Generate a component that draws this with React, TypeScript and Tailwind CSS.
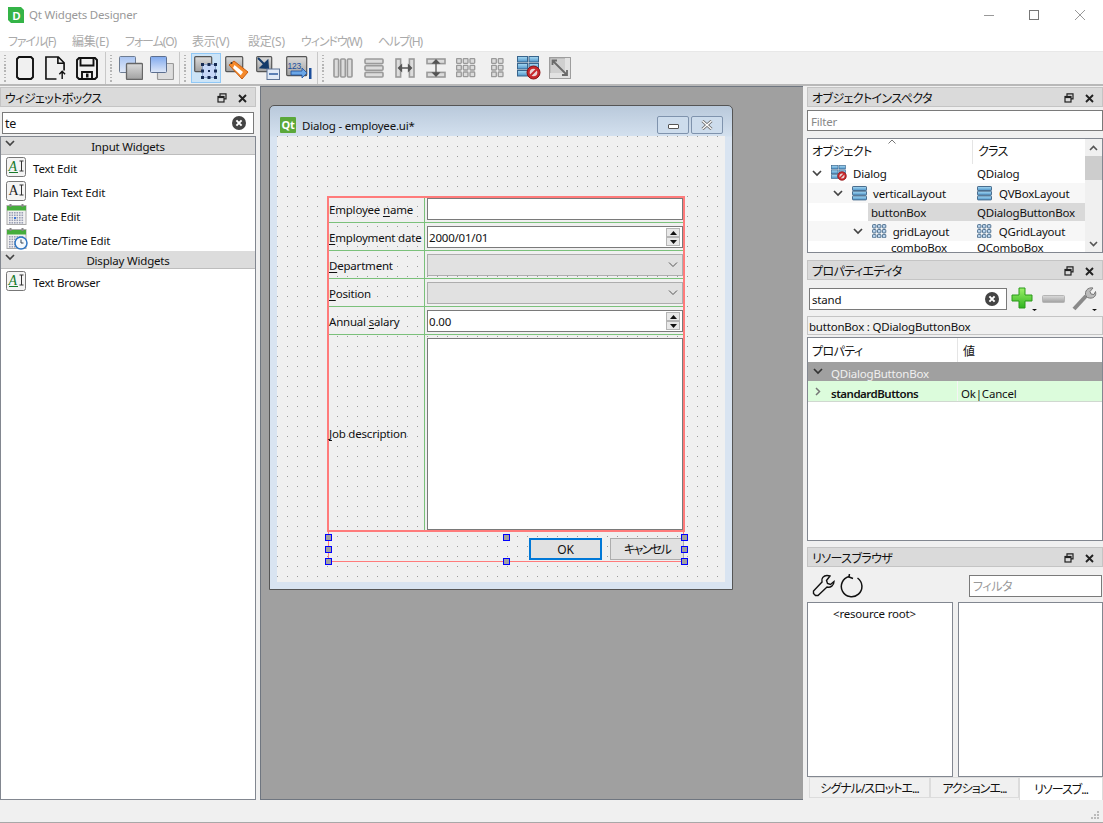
import React from "react";

const Grad = () => (
  <svg width="0" height="0" className="absolute">
    <defs>
      <linearGradient id="gGray" x1="0" y1="0" x2="0" y2="1"><stop offset="0" stopColor="#dcdcdc" /><stop offset="1" stopColor="#a0a0a0" /></linearGradient>
      <linearGradient id="gBlue" x1="0" y1="0" x2="0" y2="1"><stop offset="0" stopColor="#a9c4f2" /><stop offset="1" stopColor="#e1e9f8" /></linearGradient>
      <linearGradient id="gBlue2" x1="0" y1="0" x2="0" y2="1"><stop offset="0" stopColor="#7fa9ee" /><stop offset="1" stopColor="#dfe8f8" /></linearGradient>
      <linearGradient id="gBar" x1="0" y1="0" x2="0" y2="1"><stop offset="0" stopColor="#a9dcf5" /><stop offset="1" stopColor="#4f94c9" /></linearGradient>
      <linearGradient id="gPlus" x1="0" y1="0" x2="0" y2="1"><stop offset="0" stopColor="#9cf06a" /><stop offset="1" stopColor="#2fb31f" /></linearGradient>
    </defs>
  </svg>
);

const DockBtns = () => (
  <div className="ml-auto flex items-center gap-[11px] pr-[8px] pt-[2px]">
    <svg width="10" height="10" viewBox="0 0 10 10" fill="none" stroke="#222" strokeWidth="1.2"><path d="M3 3V.8h6v5H7" /><rect x="1" y="3.5" width="6" height="5.5" /><path d="M1 4.5h6" /></svg>
    <svg width="9" height="9" viewBox="0 0 9 9" stroke="#222" strokeWidth="1.9"><path d="M1 1l7 7M8 1l-7 7" /></svg>
  </div>
);

const DockTitle = ({ title }: { title: string }) => (
  <div className="flex h-[20px] items-center border border-[#c4c4c4] bg-[#dadada] pl-[4px] text-[12px] text-[#111]">
    <span className="pt-[4px] tracking-[-0.6px]">{title}</span>
    <DockBtns />
  </div>
);

const ClearBtn = () => (
  <svg width="14" height="14" viewBox="0 0 14 14" className="shrink-0">
    <circle cx="7" cy="7" r="7" fill="#444" />
    <path d="M4.4 4.4l5.2 5.2M9.6 4.4l-5.2 5.2" stroke="#fff" strokeWidth="2" />
  </svg>
);

const Chev = ({ color = "#444" }: { color?: string }) => (
  <svg width="10" height="7" viewBox="0 0 10 7" fill="none" stroke={color} strokeWidth="1.7" className="shrink-0"><path d="M1 1l4 4 4-4" /></svg>
);

const AIIcon = ({ green }: { green?: boolean }) => (
  <svg width="20" height="20" viewBox="0 0 20 20" className="shrink-0">
    <rect x=".5" y=".5" width="19" height="19" rx="2" fill="#f4f4f4" stroke="#777" />
    <text x="2.5" y="14" fontFamily="Liberation Serif, serif" fontSize="14" fontStyle={green ? "italic" : "normal"} fill={green ? "#177a2b" : "#222"}>A</text>
    {green && <path d="M3 15.5h9" stroke="#177a2b" strokeWidth="1" />}
    <path d="M13.5 4h4M15.5 4v10M13.5 14h4" stroke="#333" strokeWidth="1" fill="none" />
  </svg>
);

const CalIcon = ({ clock }: { clock?: boolean }) => (
  <svg width="22" height="22" viewBox="0 0 22 22" className="shrink-0">
    <rect x="1" y="1.5" width="19" height="19" fill="#f1f1f1" stroke="#aaa" />
    <rect x="1" y="2" width="19" height="4.5" fill="#46ad3c" />
    <rect x="3.5" y="0" width="2" height="3" fill="#888" /><rect x="15.5" y="0" width="2" height="3" fill="#888" />
    {[8, 10.5, 13, 15.5, 18].map((y) => [3, 5.5, 8, 10.5, 13, 15.5].map((x) => <rect key={`${x}-${y}`} x={x} y={y} width="1.6" height="1.6" fill="#9aa0b5" />))}
    {clock ? (
      <g><circle cx="15" cy="15" r="6" fill="#f4f8fc" stroke="#2e76c4" strokeWidth="1.5" /><path d="M15 11.5V15h2.5" stroke="#345" strokeWidth="1" fill="none" /></g>
    ) : (
      <rect x="8" y="13" width="2" height="2" fill="#3d76d8" />
    )}
  </svg>
);

const Cat = ({ title }: { title: string }) => (
  <div className="relative flex h-[18px] items-center justify-center border-b border-[#bdbdbd] bg-[#dcdcdc] pt-[2px] text-[#111]">
    <span className="absolute left-[4px] top-[3px]"><Chev /></span>
    {title}
  </div>
);

const Item = ({ icon, label }: { icon: React.ReactNode; label: string }) => (
  <div className="flex h-[24px] items-center pl-[5px]">
    <span className="flex w-[27px]">{icon}</span>
    <span className="pt-[4px] text-[#111]">{label}</span>
  </div>
);

const Grip = () => (
  <div className="mx-[3px] flex h-[27px] w-[2px] shrink-0 flex-col justify-between">
    {Array.from({ length: 9 }).map((_, i) => <span key={i} className="block h-[1.5px] w-[2px] bg-[#b5b5b5]" />)}
  </div>
);
const Sep = () => <div className="ml-[2px] mr-[1px] h-[32px] w-px shrink-0 bg-[#c8c8c8]" />;

const IconNew = () => (
  <svg width="18" height="24" viewBox="0 0 18 24" fill="none" stroke="#111" strokeWidth="1.9"><path d="M3 1h12l2 2v18l-2 2H3l-2-2V3z" /></svg>
);
const IconOpen = () => (
  <svg width="21" height="24" viewBox="0 0 22 25" fill="none" stroke="#111" strokeWidth="1.7"><path d="M12 24H1V1h13l6 6v8M13.5 1v6.5H20" /><path d="M18 24v-8M15 19l3-3 3 3" strokeWidth="1.5" /></svg>
);
const IconSave = () => (
  <svg width="22" height="23" viewBox="0 0 22 23" fill="none" stroke="#111" strokeWidth="1.9"><path d="M3 1h16l2 2v17l-2 2H3l-2-2V3z" /><path d="M4.5 1.5v7h13v-7M6 22v-7h10v7" /><rect x="10" y="16.5" width="2.5" height="4" fill="#111" stroke="none" /></svg>
);
const IconFront = () => (
  <svg width="24" height="24" viewBox="0 0 24 24" stroke="#6d7c92"><rect x=".5" y=".5" width="16" height="16" rx="1" fill="url(#gBlue)" /><rect x="7.5" y="7.5" width="16" height="16" rx="1" fill="url(#gGray)" stroke="#666" strokeWidth="1.3" /></svg>
);
const IconBack = () => (
  <svg width="24" height="24" viewBox="0 0 24 24"><rect x="7.5" y="7.5" width="16" height="16" rx="1" fill="#ddd" stroke="#999" strokeWidth="1.2" /><rect x=".5" y=".5" width="16" height="16" rx="1" fill="url(#gBlue2)" stroke="#5c6f8f" /></svg>
);
const IconWidget = () => (
  <svg width="24" height="24" viewBox="0 0 24 24">
    <rect x=".7" y=".7" width="17" height="15" rx="1" fill="url(#gGray)" stroke="#555" strokeWidth="1.2" />
    <rect x="8.5" y="8.5" width="13" height="13" fill="#c5d7f7" stroke="#6a86b8" strokeWidth=".6" />
    {[[7, 7], [13.5, 7], [20, 7], [7, 20], [13.5, 20], [20, 20], [7, 13.5], [20, 13.5]].map(([x, y], i) => <rect key={i} x={x} y={y} width="3" height="3" fill="#152a52" />)}
    <rect x="14" y="14" width="2" height="2" fill="#152a52" />
  </svg>
);
const IconTag = () => (
  <svg width="24" height="24" viewBox="0 0 24 24">
    <rect x=".7" y=".7" width="17" height="15" rx="1" fill="url(#gGray)" stroke="#555" strokeWidth="1.2" />
    <path d="M4 9l5-4 14 11-6 7z" fill="#f58a2c" stroke="#c75c10" />
    <path d="M9.5 9l8.5 7-2.2 3.2L8 12z" fill="#fff" />
    <circle cx="6.5" cy="7" r="1" fill="#333" />
  </svg>
);
const IconBuddy = () => (
  <svg width="24" height="24" viewBox="0 0 24 24">
    <rect x=".7" y=".7" width="15" height="15" rx="1" fill="url(#gGray)" stroke="#555" strokeWidth="1.2" />
    <path d="M2 2l9 9M5 11.5l7 .5-.5-7z" stroke="#123a6a" strokeWidth="2" fill="#123a6a" />
    <rect x="11" y="13" width="12.5" height="10.5" fill="#dfe9f7" stroke="#5c7396" />
    <rect x="13" y="17" width="9" height="2" fill="#5a7fb5" />
  </svg>
);
const IconTab = () => (
  <svg width="26" height="24" viewBox="0 0 26 24">
    <rect x=".7" y=".7" width="20" height="19" rx="1" fill="url(#gGray)" stroke="#555" strokeWidth="1.2" />
    <text x="1.5" y="13" fontFamily="Liberation Sans, sans-serif" fontSize="8.5" fill="#1c4f9c">123</text>
    <path d="M5 15h11v-3l5 5-5 5v-3H5z" fill="#6aa6e6" stroke="#1c4f9c" strokeWidth=".8" />
    <rect x="23" y="12" width="2.5" height="11" fill="#1c4f9c" />
  </svg>
);
const LGr = ({ children, w = 20 }: { children: React.ReactNode; w?: number }) => (
  <svg width={w} height="22" viewBox={`0 0 ${w} 22`} fill="#dcdcdc" stroke="#9a9a9a" strokeWidth="1.6">{children}</svg>
);
const IconHL = () => <LGr><rect x="1" y="2" width="4.6" height="18" rx="1" /><rect x="7.7" y="2" width="4.6" height="18" rx="1" /><rect x="14.4" y="2" width="4.6" height="18" rx="1" /></LGr>;
const IconVL = () => <LGr><rect x="1" y="2" width="18" height="4.6" rx="1" /><rect x="1" y="8.7" width="18" height="4.6" rx="1" /><rect x="1" y="15.4" width="18" height="4.6" rx="1" /></LGr>;
const IconSH = () => (
  <LGr><rect x="1" y="2" width="4.6" height="18" /><rect x="14.4" y="2" width="4.6" height="18" /><path d="M3.5 11h13M6.5 8v6l-3-3zM13.5 8v6l3-3z" fill="#555" stroke="#555" strokeWidth="1.3" /></LGr>
);
const IconSV = () => (
  <LGr><rect x="1" y="2" width="18" height="4.6" /><rect x="1" y="15.4" width="18" height="4.6" /><path d="M10 3v16M7 6h6l-3-3zM7 16h6l-3 3z" fill="#555" stroke="#555" strokeWidth="1.3" /></LGr>
);
const GridCells = ({ cols, rows, s = 4.7, gap = 6.7, fill = "#dcdcdc", stroke = "#9a9a9a", sw = 1.3 }: { cols: number; rows: number; s?: number; gap?: number; fill?: string; stroke?: string; sw?: number }) => (
  <svg width={cols * gap} height={rows * gap} viewBox={`0 0 ${cols * gap} ${rows * gap}`}>
    {Array.from({ length: rows }).flatMap((_, r) => Array.from({ length: cols }).map((_, c) => <rect key={`${r}${c}`} x={c * gap + 0.6} y={r * gap + 0.6} width={s} height={s} rx=".7" fill={fill} stroke={stroke} strokeWidth={sw} />))}
  </svg>
);
const IconBreak = ({ size = 24 }: { size?: number }) => (
  <svg width={size} height={size} viewBox="0 0 24 24">
    {[0, 7, 14].map((y) => <g key={y}><rect x=".5" y={y + .5} width="10" height="5.5" fill="url(#gBar)" stroke="#38648c" /><rect x="12" y={y + .5} width="9.5" height="5.5" fill="url(#gBar)" stroke="#38648c" /></g>)}
    <circle cx="16.5" cy="16.5" r="6.5" fill="#c8272b" stroke="#8b1113" />
    <circle cx="16.5" cy="16.5" r="3.8" fill="#e9d6d6" />
    <path d="M13.5 19.5l6-6" stroke="#c8272b" strokeWidth="2" />
  </svg>
);
const IconAdjust = () => (
  <svg width="22" height="22" viewBox="0 0 22 22">
    <rect x=".7" y=".7" width="20.6" height="20.6" fill="#cfcfcf" stroke="#9a9a9a" strokeWidth="1.3" />
    <rect x="16" y="1" width="5" height="20" fill="#e2e2e2" /><rect x="1" y="16" width="20" height="5" fill="#e2e2e2" />
    <path d="M4 4l13 13M3.5 8V3.5H8M18 13v5h-5" stroke="#6a6a6a" strokeWidth="1.8" fill="none" />
  </svg>
);
const IconVBox = ({ w = 15 }: { w?: number }) => (
  <svg width={w} height="15" viewBox="0 0 15 15" className="shrink-0">
    {[0.5, 5.2, 9.9].map((y) => <rect key={y} x=".5" y={y} width="14" height="4" rx=".6" fill="url(#gBar)" stroke="#4a6d8e" />)}
  </svg>
);
const IconGrid = () => <span className="shrink-0 leading-[0]"><GridCells cols={3} rows={3} s={3.4} gap={4.9} fill="#bcd6ee" stroke="#50708f" sw={1} /></span>;

const Tool = ({ children, w, active }: { children: React.ReactNode; w: number; active?: boolean }) => (
  <div className={active ? "flex h-[30px] shrink-0 items-center justify-center border border-[#90c8f6] bg-[#cce4f7]" : "flex h-[30px] shrink-0 items-center justify-center"} style={{ width: w }}>{children}</div>
);

const Underl = ({ pre, u, post }: { pre?: string; u: string; post?: string }) => (
  <span>{pre}<span className="underline decoration-[1px] underline-offset-[2px]">{u}</span>{post}</span>
);

const Spin = () => (
  <div className="ml-auto mr-[2px] flex w-[14px] flex-col self-center">
    {[0, 1].map((i) => (
      <div key={i} className="box-content flex h-[7px] items-center justify-center border border-[#b5b5b5] bg-[#e8e8e8]">
        <svg width="7" height="4" viewBox="0 0 7 4"><path d={i === 0 ? "M3.5 0L7 4H0z" : "M0 0h7L3.5 4z"} fill="#111" /></svg>
      </div>
    ))}
  </div>
);

const FormRow = ({ label, h, lp = 3, children }: { label: React.ReactNode; h: number; lp?: number; children: React.ReactNode }) => (
  <div className="flex border-b border-[#7bc17b]" style={{ height: h }}>
    <div className="flex w-[96px] items-center whitespace-nowrap border-r border-[#7bc17b] text-[#111]" style={{ paddingTop: lp }}>{label}</div>
    <div className="ml-[2px] flex-1">{children}</div>
  </div>
);

const Field = ({ mt = 3, spin, combo, text }: { mt?: number; spin?: boolean; combo?: boolean; text?: string }) => (
  <div
    className={combo ? "flex h-[22px] w-[256px] items-center border border-[#adadad] bg-[#e1e1e1]" : "flex h-[22px] w-[256px] items-center border border-[#7a7a7a] bg-white pl-[1px] text-[#111]"}
    style={{ marginTop: mt }}
  >
    {text && <span className="pt-[2px]">{text}</span>}
    {spin && <Spin />}
    {combo && <span className="ml-auto mr-[4px]"><svg width="10" height="6" viewBox="0 0 10 6" fill="none" stroke="#555" strokeWidth="1"><path d="M1 .5l4 4 4-4" /></svg></span>}
  </div>
);

const Handle = ({ l, t }: { l: number; t: number }) => (
  <span className="absolute h-[7px] w-[7px] border border-[#0000ff] bg-[#a0a0a0]" style={{ left: l, top: t }} />
);

const TreeRow = ({ h, bg, pl, chev, icon, name, cls, clsIcon, sel }: { h: number; bg?: string; pl: number; chev?: boolean; icon?: React.ReactNode; name: string; cls: string; clsIcon?: React.ReactNode; sel?: number }) => (
  <div className="flex shrink-0 items-center text-[#111]" style={{ height: h, background: bg }}>
    <div className="flex h-full w-[165px] items-center" style={{ paddingLeft: pl }}>
      {chev && <span className="mr-[9px]"><Chev /></span>}
      {icon && <span className="mr-[6px] flex">{icon}</span>}
      {sel ? <span className="flex h-full flex-1 items-center bg-[#d9d9d9] pl-[3px]"><span className="pt-[2px]">{name}</span></span> : <span className="pt-[2px]">{name}</span>}
    </div>
    <div className={sel ? "flex h-full flex-1 items-center gap-[7px] bg-[#d9d9d9] pl-[4px]" : "flex h-full flex-1 items-center gap-[7px] pl-[4px]"}>
      {clsIcon}<span className="pt-[2px]">{cls}</span>
    </div>
  </div>
);

export default function App() {
  const sans = "font-['Noto_Sans','Noto_Sans_CJK_JP',sans-serif] [font-feature-settings:'palt'] text-[11.5px] tracking-[-0.2px] leading-none";
  return (
    <div className={`relative flex h-[823px] w-[1103px] flex-col overflow-hidden bg-[#f0f0f0] ${sans}`}>
      <Grad />
      {/* title bar */}
      <div className="flex h-[30px] items-center bg-white pl-[8px] text-[#999]">
        <svg width="16" height="16" viewBox="0 0 16 16" className="shrink-0">
          <path d="M0 0h13l3 3v13H3l-3-3z" fill="#34b447" />
          <text x="4.5" y="12.5" fontFamily="Liberation Sans, sans-serif" fontSize="11" fontWeight="700" fill="#fff">D</text>
        </svg>
        <span className="ml-[5px]">Qt Widgets Designer</span>
        <div className="ml-auto flex items-center gap-[35px] pr-[18px]">
          <svg width="10" height="11" viewBox="0 0 10 11" stroke="#999"><path d="M0 5.5h10" /></svg>
          <svg width="10" height="10" viewBox="0 0 10 10" fill="none" stroke="#777"><rect x=".5" y=".5" width="9" height="9" /></svg>
          <svg width="10" height="10" viewBox="0 0 10 10" stroke="#999" className="ml-[1px]"><path d="M0 0l10 10M10 0L0 10" /></svg>
        </div>
      </div>
      {/* menu */}
      <div className="flex h-[22px] items-center border-b border-[#e8e8e8] bg-white pl-[8px] pt-[2px] text-[12px] text-[#aaa]">
        {["ファイル(F)", "編集(E)", "フォーム(O)", "表示(V)", "設定(S)", "ウィンドウ(W)", "ヘルプ(H)"].map((m, i) => (
          <span key={m} className={i === 1 || i === 3 || i === 4 ? "whitespace-nowrap" : "whitespace-nowrap tracking-[-1.1px]"} style={{ width: [64, 53, 67, 56, 53, 77, 50][i] }}>{m}</span>
        ))}
      </div>
      {/* toolbar */}
      <div className="flex h-[34px] items-center border-b-2 border-[#b8b8b8] bg-[#f0f0f0] pl-[1px]">
        <Grip />
        <div className="flex items-center pl-[1px]">
          <Tool w={30}><IconNew /></Tool>
          <Tool w={31}><IconOpen /></Tool>
          <Tool w={32}><IconSave /></Tool>
        </div>
        <Sep />
        <Grip />
        <div className="flex items-center">
          <Tool w={32}><IconFront /></Tool>
          <Tool w={30}><IconBack /></Tool>
        </div>
        <Sep />
        <Grip />
        <div className="flex items-center pl-[2px]">
          <Tool w={30} active><IconWidget /></Tool>
          <Tool w={32}><IconTag /></Tool>
          <Tool w={30}><IconBuddy /></Tool>
          <Tool w={32}><IconTab /></Tool>
        </div>
        <Sep />
        <Grip />
        <div className="flex items-center">
          <Tool w={31}><IconHL /></Tool>
          <Tool w={31}><IconVL /></Tool>
          <Tool w={31}><IconSH /></Tool>
          <Tool w={31}><IconSV /></Tool>
          <Tool w={31}><GridCells cols={3} rows={3} /></Tool>
          <Tool w={31}><GridCells cols={2} rows={3} /></Tool>
          <Tool w={31}><IconBreak /></Tool>
          <Tool w={31}><IconAdjust /></Tool>
        </div>
      </div>
      {/* main */}
      <div className="flex h-[714px]">
        {/* left */}
        <div className="flex w-[256px] flex-col pt-[1px]">
          <DockTitle title="ウィジェットボックス" />
          <div className="mx-[2px] mt-[5px] flex h-[22px] items-center border border-[#7a7a7a] bg-white pl-[2px] pr-[7px] text-[12.5px] text-[#111]">
            <span className="pt-[2px]">te</span><span className="ml-auto"><ClearBtn /></span>
          </div>
          <div className="mt-[2px] flex-1 border border-[#828790] bg-white">
            <Cat title="Input Widgets" />
            <Item icon={<AIIcon green />} label="Text Edit" />
            <Item icon={<AIIcon />} label="Plain Text Edit" />
            <Item icon={<CalIcon />} label="Date Edit" />
            <Item icon={<CalIcon clock />} label="Date/Time Edit" />
            <Cat title="Display Widgets" />
            <Item icon={<AIIcon green />} label="Text Browser" />
          </div>
        </div>
        {/* center */}
        <div className="ml-[4px] w-[543px] border-t border-b border-l border-[#6f7680] bg-[#a0a0a0] pl-[8px] pt-[18px]">
          {/* sub-window */}
          <div className="flex h-[485px] w-[464px] flex-col rounded-t-[5px] border border-[#555] bg-[linear-gradient(#b9c9db_0px,#d3e0ee_30px,#d9e4f1_31px)] px-[7px] pb-[7px]">
            <div className="flex h-[30px] items-center pt-[7px]">
              <span className="ml-[3px] flex h-[16px] w-[16px] items-center justify-center rounded-[1px] bg-[#5ba83a] text-[11px] font-bold text-white">Qt</span>
              <span className="ml-[6px] pt-[2px] text-[#111]">Dialog - employee.ui*</span>
              <div className="ml-auto mr-[2px] flex gap-[2px]">
                <div className="flex h-[18px] w-[32px] items-end justify-center rounded-[2px] border border-[#7f93ad] bg-[#cddcec] pb-[4px]">
                  <span className="block h-[5px] w-[11px] rounded-[1px] border border-[#555] bg-white" />
                </div>
                <div className="flex h-[18px] w-[32px] items-center justify-center rounded-[2px] border border-[#7f93ad] bg-[#cddcec]">
                  <svg width="12" height="10" viewBox="0 0 12 10" stroke="#666" strokeWidth="3"><path d="M1.5 1l9 8M10.5 1l-9 8" /><path d="M1.5 1l9 8M10.5 1l-9 8" stroke="#fff" strokeWidth="1.4" /></svg>
                </div>
              </div>
            </div>
            {/* canvas */}
            <div className="flex-1 bg-[#f0f0f0] bg-[radial-gradient(circle_at_0.5px_0.5px,#9a9a9a_0.6px,transparent_0.7px)] bg-[length:10px_10px] pl-[50px] pt-[60px]">
              <div className="h-[336px] w-[358px] border-2 border-[#ff7b7b]">
                <FormRow h={25} lp={0} label={<Underl pre="Employee " u="n" post="ame" />}><Field mt={0} /></FormRow>
                <FormRow h={28} label={<Underl u="E" post="mployment date" />}><Field spin text="2000/01/01" /></FormRow>
                <FormRow h={28} label={<Underl u="D" post="epartment" />}><Field combo /></FormRow>
                <FormRow h={28} label={<Underl u="P" post="osition" />}><Field combo /></FormRow>
                <FormRow h={28} label={<Underl pre="Annual " u="s" post="alary" />}><Field spin text="0.00" /></FormRow>
                <div className="flex h-[195px]">
                  <div className="flex w-[96px] items-center border-r border-[#7bc17b] pt-[3px] text-[#111]"><Underl u="J" post="ob description" /></div>
                  <div className="ml-[2px] mt-[3px] h-[192px] w-[256px] border border-[#7a7a7a] bg-white" />
                </div>
              </div>
              <div className="relative ml-[1px] flex h-[30px] w-[356px] justify-end gap-[8px] border-x border-b border-[#ff7b7b] pt-[6px] text-[#111]">
                <div className="flex h-[22px] w-[73px] items-center justify-center border-2 border-[#0078d7] bg-[#e1e1e1] pt-[2px] text-[12px]">OK</div>
                <div className="-mr-[1px] flex h-[22px] w-[74px] items-center justify-center border border-[#adadad] bg-[#e1e1e1] pt-[2px] text-[12px] tracking-[-1.6px]">キャンセル</div>
                <Handle l={-4} t={2} /><Handle l={174} t={2} /><Handle l={352} t={2} />
                <Handle l={-4} t={14} /><Handle l={352} t={14} />
                <Handle l={-4} t={26} /><Handle l={174} t={26} /><Handle l={352} t={26} />
              </div>
            </div>
          </div>
        </div>
        {/* right */}
        <div className="ml-[4px] flex w-[296px] flex-col pt-[1px] text-[#111]">
          <DockTitle title="オブジェクトインスペクタ" />
          <div className="mt-[3px] flex h-[21px] items-center border border-[#7a7a7a] bg-white pl-[3px] pt-[2px] text-[#888]">Filter</div>
          <div className="mt-[7px] flex h-[115px] overflow-hidden border border-[#828790] bg-white">
            <div className="flex flex-1 flex-col overflow-hidden">
              <div className="relative flex h-[24px] shrink-0 items-center pt-[2px] text-[12px]">
                <span className="absolute left-[80px] top-[0px]"><svg width="8" height="5" viewBox="0 0 8 5" fill="none" stroke="#777"><path d="M.5 4.5L4 1l3.5 3.5" /></svg></span>
                <span className="w-[165px] border-r border-[#e5e5e5] pl-[4px] leading-[24px] tracking-[-0.6px]">オブジェクト</span>
                <span className="pl-[5px] tracking-[-0.6px]">クラス</span>
              </div>
              <TreeRow h={20} pl={4} chev icon={<IconBreak size={16} />} name="Dialog" cls="QDialog" />
              <TreeRow h={20} bg="#f7f7f7" pl={25} chev icon={<IconVBox />} name="verticalLayout" cls="QVBoxLayout" clsIcon={<IconVBox />} />
              <TreeRow h={18} pl={60} sel={1} name="buttonBox" cls="QDialogButtonBox" />
              <TreeRow h={20} bg="#f7f7f7" pl={45} chev icon={<IconGrid />} name="gridLayout" cls="QGridLayout" clsIcon={<IconGrid />} />
              <TreeRow h={11} pl={83} name="comboBox" cls="QComboBox" />
            </div>
            <div className="flex w-[17px] shrink-0 flex-col items-center bg-[#f0f0f0]">
              <div className="flex h-[17px] items-center"><svg width="9" height="6" viewBox="0 0 9 6" fill="none" stroke="#555" strokeWidth="1.6"><path d="M1 5l3.5-3.5L8 5" /></svg></div>
              <div className="h-[24px] w-full bg-[#cdcdcd]" />
              <div className="mt-auto flex h-[17px] items-center"><svg width="9" height="6" viewBox="0 0 9 6" fill="none" stroke="#555" strokeWidth="1.6"><path d="M1 1l3.5 3.5L8 1" /></svg></div>
            </div>
          </div>
          <div className="mt-[7px]"><DockTitle title="プロパティエディタ" /></div>
          <div className="mt-[8px] flex h-[22px] items-center pl-[2px]">
            <div className="flex h-[22px] w-[198px] items-center border border-[#7a7a7a] bg-white pl-[2px] pr-[7px]">
              <span className="pt-[2px]">stand</span><span className="ml-auto"><ClearBtn /></span>
            </div>
            <svg width="26" height="24" viewBox="0 0 26 24" className="ml-[4px]">
              <path d="M8 1h6v7h7v6h-7v7H8v-7H1V8h7z" fill="url(#gPlus)" stroke="#2a9a1a" />
              <path d="M21 22h5l-2.5 2z" fill="#111" />
            </svg>
            <svg width="23" height="8" viewBox="0 0 23 8" className="ml-[5px]"><rect x=".5" y=".5" width="22" height="7" rx="1" fill="url(#gGray)" stroke="#b5b5b5" /></svg>
            <svg width="26" height="24" viewBox="0 0 26 24" className="ml-[7px]">
              <path d="M2 22L14 9" stroke="#8a8a8a" strokeWidth="4" />
              <path d="M14 9c-2-5 2-9 7-8l-3 3.5 1 2.5 3 .5 1.5-3c1.5 5-3 8-8 6z" fill="#bbb" stroke="#777" />
              <path d="M20 22h5l-2.5 2z" fill="#111" />
            </svg>
          </div>
          <div className="mt-[6px] flex h-[19px] items-center border border-[#c4c4c4] pl-[1px] pt-[2px]">buttonBox : QDialogButtonBox</div>
          <div className="mt-[2px] flex h-[204px] flex-col border border-[#828790] bg-white">
            <div className="flex h-[24px] items-center text-[12px]">
              <span className="flex h-full w-[150px] items-center border-r border-[#e5e5e5] pl-[4px] pt-[4px] tracking-[-0.6px]">プロパティ</span>
              <span className="pl-[5px] pt-[4px]">値</span>
            </div>
            <div className="flex h-[19px] items-center bg-[#a0a0a0] pl-[5px] text-[#f0f0f0]">
              <Chev color="#333" /><span className="ml-[8px] pt-[4px]">QDialogButtonBox</span>
            </div>
            <div className="flex h-[21px] items-center border-b border-[#d0d8d0] bg-[#dcfcdc]">
              <span className="flex h-full w-[150px] items-center border-r border-[#f5f5f5] pl-[7px] font-semibold tracking-[-0.5px]">
                <svg width="6" height="9" viewBox="0 0 6 9" fill="none" stroke="#777" strokeWidth="1.5" className="mr-[10px]"><path d="M1 1l3.5 3.5L1 8" /></svg>
                <span className="pt-[5px]">standardButtons</span>
              </span>
              <span className="pl-[3px] pt-[5px]">Ok|Cancel</span>
            </div>
          </div>
          <div className="mt-[6px]"><DockTitle title="リソースブラウザ" /></div>
          <div className="mt-[7px] flex h-[23px] items-center pl-[5px]">
            <svg width="23" height="23" viewBox="0 0 23 23" fill="none" stroke="#111" strokeWidth="1.4">
              <path d="M15 1.5c-3.5 0-6 3-5 6.5L1.5 17v2.5l2 2H6l9-8.5c3.5 1 7-1.5 7-5.5l-3.5 3-3-1-1-3L18 2c-1-.4-2-.5-3-.5z" />
            </svg>
            <svg width="24" height="24" viewBox="0 0 24 24" fill="none" stroke="#111" strokeWidth="1.5" className="ml-[5px]">
              <path d="M9 2.5A10.3 10.3 0 1 0 17.5 4" /><path d="M9.5 -.5L9 3l4 1.5" />
            </svg>
            <div className="ml-[105px] flex h-[22px] w-[133px] items-center border border-[#7a7a7a] bg-white pl-[3px] pt-[2px] text-[12px] tracking-[-0.4px] text-[#999]">フィルタ</div>
          </div>
          <div className="mt-[5px] flex h-[175px] gap-[5px]">
            <div className="w-[146px] border border-[#828790] bg-white pl-[25px] pt-[5px]">&lt;resource root&gt;</div>
            <div className="flex-1 border border-[#828790] bg-white" />
          </div>
          <div className="flex h-[23px] items-start pl-[2px] text-[12px] tracking-[-1px]">
            <div className="flex h-[21px] w-[121px] items-center justify-center border border-[#dcdcdc] pt-[2px]">シグナル/スロットエ...</div>
            <div className="flex h-[21px] w-[89px] items-center justify-center border border-[#dcdcdc] pt-[2px]">アクションエ...</div>
            <div className="flex h-[24px] w-[84px] shrink-0 items-center justify-center border border-[#dcdcdc] bg-white pt-[2px]">リソースブ...</div>
          </div>
        </div>
      </div>
      {/* bottom */}
      <div className="relative flex-1 border-b border-[#a8a8a8] bg-[#f0f0f0]">
        <span className="absolute bottom-[3px] right-[4px] leading-[0]"><svg width="8" height="8" viewBox="0 0 8 8" fill="#bbb"><rect x="6" y="0" width="2" height="2" /><rect x="3" y="3" width="2" height="2" /><rect x="6" y="3" width="2" height="2" /><rect x="0" y="6" width="2" height="2" /><rect x="3" y="6" width="2" height="2" /><rect x="6" y="6" width="2" height="2" /></svg></span>
      </div>
    </div>
  );
}
